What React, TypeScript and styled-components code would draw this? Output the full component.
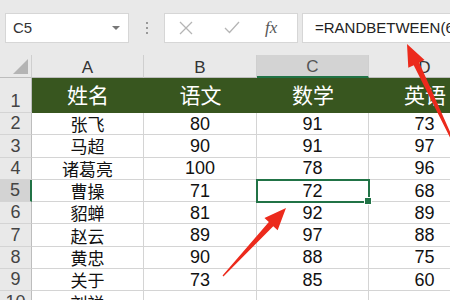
import React from "react";
import styled, { createGlobalStyle } from "styled-components";

const GlobalStyle = createGlobalStyle`
  html, body {
    margin: 0;
    padding: 0;
    background: #fff;
    overflow: hidden;
  }
  body {
    font-family: "Liberation Sans", "Noto Sans CJK SC", sans-serif;
  }
`;

const Page = styled.div`
  position: relative;
  width: 450px;
  height: 300px;
  overflow: hidden;
  background: #fff;
`;

const Toolbar = styled.div`
  display: flex;
  align-items: center;
  height: 55px;
  padding: 0 0 0 5px;
  box-sizing: border-box;
  background: #e9e9e9;
`;

const NameBox = styled.div`
  display: flex;
  align-items: center;
  justify-content: space-between;
  width: 124px;
  height: 30px;
  box-sizing: border-box;
  padding: 0 8px 0 7px;
  background: #fff;
  border: 1px solid #d6d6d6;
  font-size: 15px;
  color: #333;
`;

const Caret = styled.span`
  width: 0;
  height: 0;
  border-left: 4px solid transparent;
  border-right: 4px solid transparent;
  border-top: 4px solid #777;
`;

const Grip = styled.div`
  display: flex;
  flex-direction: column;
  gap: 3px;
  margin: 0 16px 0 17px;
  span {
    width: 2px;
    height: 2px;
    background: #999;
  }
`;

const FuncBox = styled.div`
  display: flex;
  align-items: center;
  width: 134px;
  height: 30px;
  box-sizing: border-box;
  background: #fff;
  border: 1px solid #d6d6d6;
  padding-left: 14px;
`;

const IconSlot = styled.div<{ $w: number }>`
  width: ${(p) => p.$w}px;
  display: flex;
  align-items: center;
`;

const Fx = styled.span`
  font-family: "Liberation Serif", serif;
  font-style: italic;
  font-size: 17px;
  color: #555;
`;

const FormulaBox = styled.div`
  flex: 1;
  min-width: 0;
  display: flex;
  align-items: center;
  height: 30px;
  margin-left: 4px;
  box-sizing: border-box;
  background: #fff;
  border: 1px solid #d6d6d6;
  border-right: none;
  padding-left: 12px;
  font-size: 15px;
  color: #222;
  white-space: nowrap;
  overflow: hidden;
`;

const Sheet = styled.div`
  display: grid;
  grid-template-columns: 32px 112px 113px 112px 112px;
  grid-template-rows: 23px 35px repeat(9, 22.3px);
  background: #fff;
`;

const Corner = styled.div`
  position: relative;
  background: #e9e9e9;
  border-right: 1px solid #cfcfcf;
  border-bottom: 1px solid #bdbdbd;
  &::after {
    content: "";
    position: absolute;
    right: 3px;
    bottom: 3px;
    width: 0;
    height: 0;
    border-left: 15px solid transparent;
    border-bottom: 15px solid #b4b4b4;
  }
`;

const ColHead = styled.div<{ $active?: boolean }>`
  display: flex;
  align-items: center;
  justify-content: center;
  box-sizing: border-box;
  background: ${(p) => (p.$active ? "#d3d3d3" : "#e9e9e9")};
  border-right: 1px solid #cfcfcf;
  border-bottom: ${(p) => (p.$active ? "2px solid #217346" : "1px solid #bdbdbd")};
  font-size: 17px;
  line-height: 1;
  color: ${(p) => (p.$active ? "#555" : "#333")};
  padding-top: 2px;
`;

const RowHead = styled.div<{ $active?: boolean }>`
  display: flex;
  align-items: flex-end;
  justify-content: center;
  box-sizing: border-box;
  padding-bottom: 2px;
  background: ${(p) => (p.$active ? "#d3d3d3" : "#e9e9e9")};
  border-right: ${(p) => (p.$active ? "2px solid #217346" : "1px solid #bdbdbd")};
  border-bottom: 1px solid #d4d4d4;
  font-size: 18px;
  line-height: 1;
  color: #444;
`;

const HeadCell = styled.div`
  display: flex;
  align-items: center;
  justify-content: center;
  background: #38561f;
  color: #fff;
  font-family: "Noto Sans CJK SC", sans-serif;
  font-size: 21px;
  line-height: 1;
  padding-bottom: 2px;
  box-sizing: border-box;
`;

const Cell = styled.div<{ $cjk?: boolean; $selected?: boolean }>`
  position: relative;
  display: flex;
  align-items: center;
  justify-content: center;
  box-sizing: border-box;
  border-right: 1px solid #d4d4d4;
  border-bottom: 1px solid #d4d4d4;
  font-family: ${(p) =>
    p.$cjk ? `"Noto Sans CJK SC", sans-serif` : `"Liberation Sans", sans-serif`};
  font-size: ${(p) => (p.$cjk ? "17px" : "18px")};
  line-height: 1;
  color: #111;
  ${(p) =>
    p.$selected &&
    `
    outline: 2px solid #217346;
    outline-offset: -1px;
    z-index: 1;
  `}
`;

const Handle = styled.span`
  position: absolute;
  right: -4px;
  bottom: -4px;
  width: 6px;
  height: 6px;
  background: #217346;
  border: 1px solid #fff;
`;

const Arrows = styled.svg`
  position: absolute;
  left: 0;
  top: 0;
  pointer-events: none;
`;

const rows: [string, number, number, number][] = [
  ["张飞", 80, 91, 73],
  ["马超", 90, 91, 97],
  ["诸葛亮", 100, 78, 96],
  ["曹操", 71, 72, 68],
  ["貂蝉", 81, 92, 89],
  ["赵云", 89, 97, 88],
  ["黄忠", 90, 88, 75],
  ["关于", 73, 85, 60],
  ["刘禅", 0, 0, 0],
];

function RedArrow({ x1, y1, x2, y2 }: { x1: number; y1: number; x2: number; y2: number }) {
  const dx = x2 - x1;
  const dy = y2 - y1;
  const len = Math.hypot(dx, dy);
  const ux = dx / len;
  const uy = dy / len;
  const px = -uy;
  const py = ux;
  const head = 22;
  const hw = 9;
  const bx = x2 - ux * head;
  const by = y2 - uy * head;
  const pts = [
    [x1 + px * 0.6, y1 + py * 0.6],
    [bx + px * 3, by + py * 3],
    [bx + px * hw, by + py * hw],
    [x2, y2],
    [bx - px * hw, by - py * hw],
    [bx - px * 3, by - py * 3],
    [x1 - px * 0.6, y1 - py * 0.6],
  ]
    .map((p) => p.join(","))
    .join(" ");
  return <polygon points={pts} fill="#ec2a1c" />;
}

export default function App() {
  return (
    <Page>
      <GlobalStyle />
      <Toolbar>
        <NameBox>
          C5
          <Caret />
        </NameBox>
        <Grip>
          <span />
          <span />
          <span />
        </Grip>
        <FuncBox>
          <IconSlot $w={45}>
            <svg width="14" height="14" viewBox="0 0 14 14">
              <path d="M1 1 L13 13 M13 1 L1 13" stroke="#b5b5b5" strokeWidth="1.3" fill="none" />
            </svg>
          </IconSlot>
          <IconSlot $w={41}>
            <svg width="16" height="13" viewBox="0 0 16 13">
              <path d="M1 7 L5.5 11.5 L15 1" stroke="#b5b5b5" strokeWidth="1.3" fill="none" />
            </svg>
          </IconSlot>
          <Fx>fx</Fx>
        </FuncBox>
        <FormulaBox>=RANDBETWEEN(60,100)</FormulaBox>
      </Toolbar>
      <Sheet>
        <Corner />
        <ColHead>A</ColHead>
        <ColHead>B</ColHead>
        <ColHead $active>C</ColHead>
        <ColHead>D</ColHead>

        <RowHead>1</RowHead>
        <HeadCell>姓名</HeadCell>
        <HeadCell>语文</HeadCell>
        <HeadCell>数学</HeadCell>
        <HeadCell>英语</HeadCell>

        {rows.map(([name, a, b, c], i) => {
          const n = i + 2;
          const sel = n === 5;
          const last = n === 10;
          return (
            <React.Fragment key={n}>
              <RowHead $active={sel}>{n}</RowHead>
              <Cell $cjk>{name}</Cell>
              <Cell>{last ? "" : a}</Cell>
              <Cell $selected={sel}>
                {last ? "" : b}
                {sel && <Handle />}
              </Cell>
              <Cell>{last ? "" : c}</Cell>
            </React.Fragment>
          );
        })}
      </Sheet>
      <Arrows width="450" height="300" viewBox="0 0 450 300">
        <RedArrow x1={223} y1={276} x2={286} y2={208} />
        <RedArrow x1={462} y1={160} x2={407} y2={44} />
      </Arrows>
    </Page>
  );
}
